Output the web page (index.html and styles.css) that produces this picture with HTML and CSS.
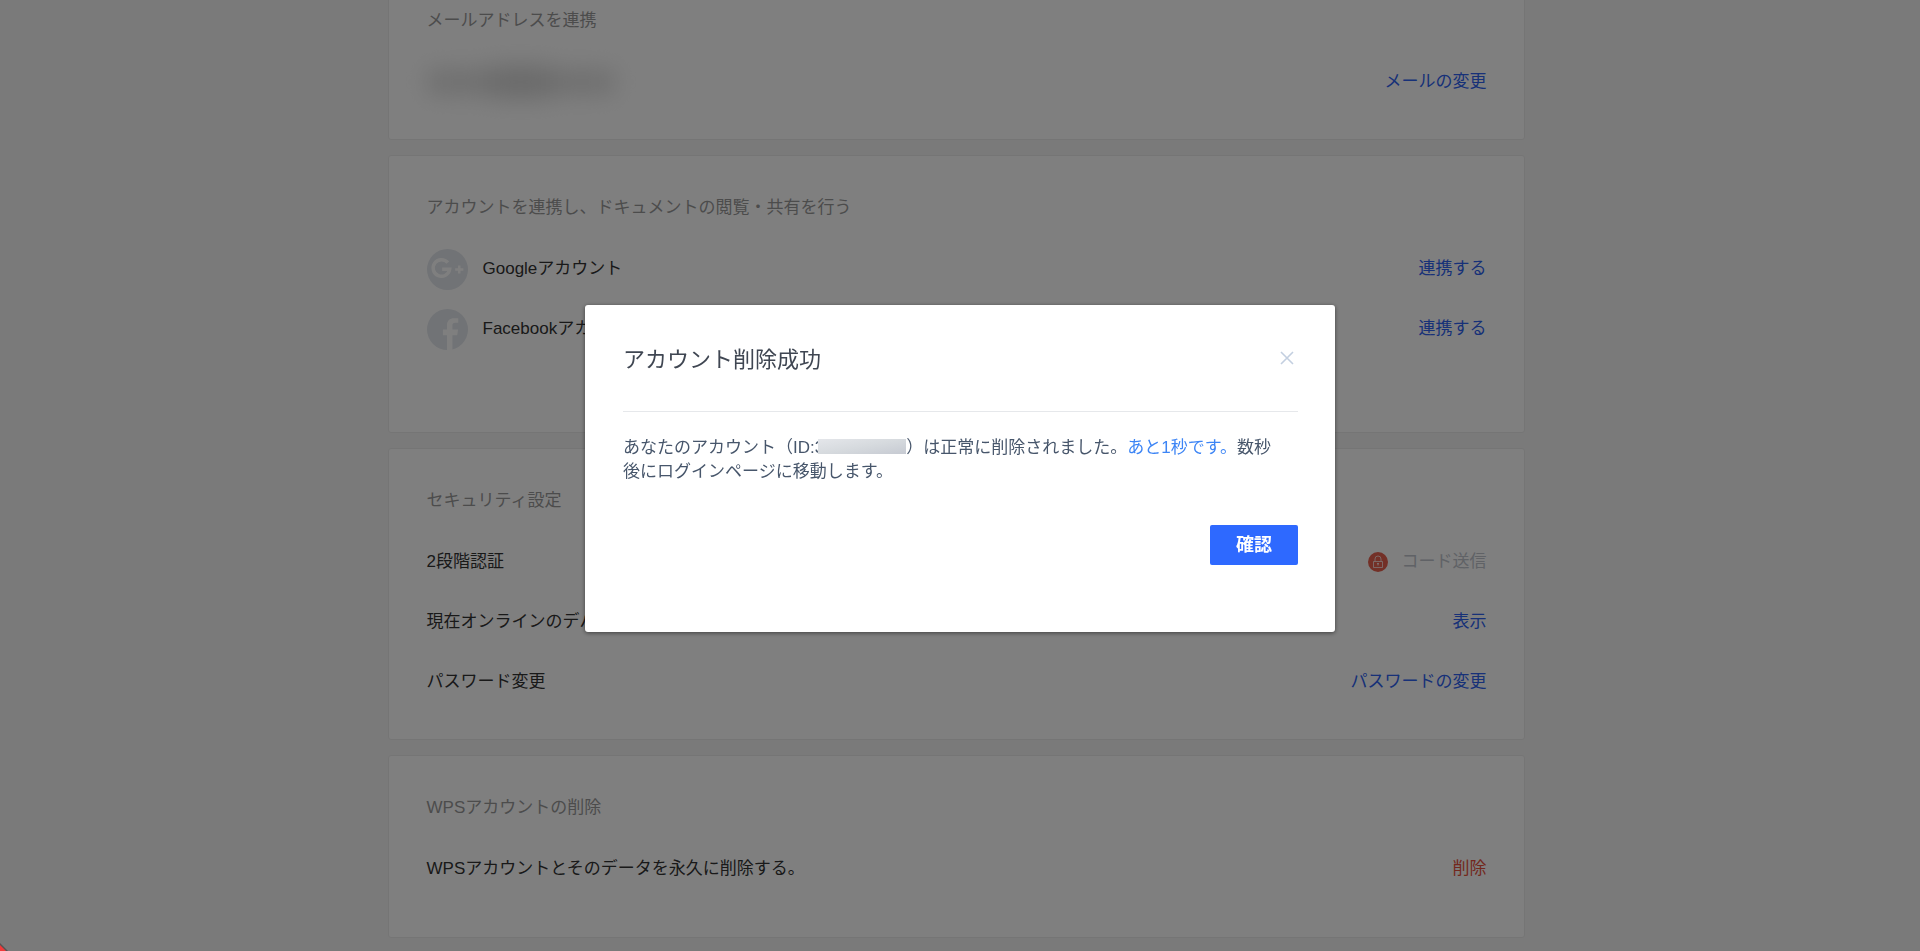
FILE: index.html
```html
<!DOCTYPE html>
<html lang="ja">
<head>
<meta charset="utf-8">
<title>アカウント設定</title>
<link rel="stylesheet" href="styles.css">
</head>
<body>
<main class="page">
  <section class="card">
    <h2 class="card-title">メールアドレスを連携</h2>
    <div class="row">
      <span class="hidden-mail"><i class="smudge"></i><i class="smudge smudge-mid"></i><i class="smudge"></i></span>
      <a class="action" href="#">メールの変更</a>
    </div>
  </section>

  <section class="card card-accounts">
    <h2 class="card-title">アカウントを連携し、ドキュメントの閲覧・共有を行う</h2>
    <div class="row">
      <span class="account">
        <svg class="brand" viewBox="0 0 40 40" aria-hidden="true">
          <circle cx="20" cy="20" r="20" fill="#e2e6ec"/>
          <path d="M20.300 13.300A8.100 8.100 0 1 0 22.100 19.800H14.800" fill="none" stroke="#fff" stroke-width="3.400"/>
          <path d="M31.500 16v8M27.500 20h8" stroke="#fff" stroke-width="2.400"/>
        </svg>
        <span>Googleアカウント</span>
      </span>
      <a class="action" href="#">連携する</a>
    </div>
    <div class="row">
      <span class="account">
        <svg class="brand" viewBox="0 0 40 40" aria-hidden="true">
          <circle cx="20" cy="20" r="20" fill="#e2e6ec"/>
          <path d="M19.500 40V25.500H15.500V20H19.500V16C19.500 11.500 22 9 26.500 9H30.500V13.500H27.500C25.500 13.500 24.800 14.500 24.800 16.200V20H30.300L29.500 25.500H24.800V40Z" fill="#fff"/>
        </svg>
        <span>Facebookアカウント</span>
      </span>
      <a class="action" href="#">連携する</a>
    </div>
  </section>

  <section class="card">
    <h2 class="card-title">セキュリティ設定</h2>
    <div class="row">
      <span>2段階認証</span>
      <span class="locked">
        <svg class="lock" viewBox="0 0 20 20" aria-hidden="true">
          <circle cx="10" cy="10" r="10" fill="#e6604f"/>
          <path d="M5.500 9.500h9v6h-9zM7 9.500V7a3 3 0 0 1 6 0v2.500" fill="none" stroke="#fff" stroke-opacity=".7"/>
          <path d="M9 11h2v1l-.5.500v1h-1v-1L9 12z" fill="#fff" fill-opacity=".8"/>
        </svg>
        コード送信
      </span>
    </div>
    <div class="row">
      <span>現在オンラインのデバイス</span>
      <a class="action" href="#">表示</a>
    </div>
    <div class="row">
      <span>パスワード変更</span>
      <a class="action" href="#">パスワードの変更</a>
    </div>
  </section>

  <section class="card card-delete">
    <h2 class="card-title">WPSアカウントの削除</h2>
    <div class="row">
      <span>WPSアカウントとそのデータを永久に削除する。</span>
      <a class="action action-danger" href="#">削除</a>
    </div>
  </section>
</main>

<div class="overlay">
  <div class="modal" role="dialog" aria-modal="true" aria-labelledby="modal-title">
    <header class="modal-head">
      <h1 class="modal-title" id="modal-title">アカウント削除成功</h1>
      <button class="close" type="button" aria-label="閉じる">
        <svg class="close-icon" viewBox="0 0 14 14" aria-hidden="true"><path d="M1 1l12 12M13 1L1 13" fill="none" stroke="#c3cfe0" stroke-width="1.600"/></svg>
      </button>
    </header>
    <p class="modal-text">あなたのアカウント（ID:3<span class="mask"></span>）は正常に削除されました。<span class="countdown">あと1秒です。</span>数秒<br>後にログインページに移動します。</p>
    <div class="modal-foot"><button class="confirm" type="button">確認</button></div>
  </div>
</div>
<svg class="corner" viewBox="0 0 8 8" aria-hidden="true"><path d="M0 0L8 8H0Z" fill="#555"/><path d="M0 2L6 8H0Z" fill="#f03a3a"/></svg>
</body>
</html>
```
FILE: styles.css
```css
* {
  box-sizing: border-box;
}

body {
  margin: 0;
  height: 100vh;
  overflow: hidden;
  background: #f5f5f5;
  color: #333;
  font-family: "Liberation Sans", "Noto Sans CJK JP", sans-serif;
  font-size: 17px;
  line-height: 24px;
}

.page {
  display: flex;
  flex-direction: column;
  gap: 15px;
  max-width: 1137px;
  margin: -32px auto 0;
  transform: translateX(-4px);
}

.card {
  padding: 40px 37px 27px 38px;
  border: 1px solid #ebebeb;
  border-radius: 3px;
  background: #fff;
}

.card-accounts {
  padding-bottom: 73px;
}

.card-delete {
  padding-bottom: 38px;
}

.card-title {
  margin: 0 0 19px;
  color: #999;
  font-size: 17px;
  font-weight: 400;
}

.row {
  display: flex;
  align-items: center;
  justify-content: space-between;
  height: 60px;
}

.action {
  color: #2e62f0;
  text-decoration: none;
}

.action-danger {
  color: #e6503c;
}

.account {
  display: flex;
  align-items: center;
  gap: 15px;
}

.brand {
  width: 41px;
  height: 41px;
}

.locked {
  display: flex;
  align-items: center;
  gap: 14px;
  color: #c0c4cc;
}

.lock {
  width: 20px;
  height: 20px;
}

.hidden-mail {
  display: flex;
  align-items: center;
  width: 188px;
  filter: blur(12px);
}

.smudge {
  flex: 1;
  height: 24px;
  background: #dcdcdc;
}

.smudge-mid {
  height: 32px;
  background: #d4d4d4;
}

.overlay {
  position: fixed;
  inset: 0;
  display: flex;
  align-items: center;
  justify-content: center;
  padding-bottom: 14px;
  background: rgba(0, 0, 0, 0.5);
}

.modal {
  width: 750px;
  padding: 39px 37px 67px 38px;
  border-radius: 3px;
  background: #fff;
  box-shadow: 0 1px 4px rgba(0, 0, 0, 0.5);
}

.modal-head {
  display: flex;
  align-items: flex-start;
  justify-content: space-between;
  padding-bottom: 35px;
  border-bottom: 1px solid #e6e8eb;
}

.modal-title {
  margin: 0;
  color: #3f4652;
  font-size: 22px;
  font-weight: 400;
  line-height: 32px;
}

.close {
  display: flex;
  padding: 7px 4px;
  border: 0;
  background: none;
}

.close-icon {
  width: 14px;
  height: 14px;
}

.modal-text {
  margin: 24px 0 41px;
  color: #47566b;
}

.mask {
  display: inline-block;
  width: 88px;
  height: 15px;
  margin-left: -6px;
  vertical-align: -1px;
  background: linear-gradient(170deg, #e4e6ea, #d6dade 50%, #c6cad2);
}

.countdown {
  color: #3d85f5;
}

.modal-foot {
  display: flex;
  justify-content: flex-end;
}

.confirm {
  width: 88px;
  height: 40px;
  padding: 0;
  border: 0;
  border-radius: 2px;
  background: #2e69ff;
  color: #fff;
  font: inherit;
  font-size: 18px;
  font-weight: 700;
}

.corner {
  position: fixed;
  bottom: 0;
  left: 0;
  width: 8px;
  height: 8px;
}
```
